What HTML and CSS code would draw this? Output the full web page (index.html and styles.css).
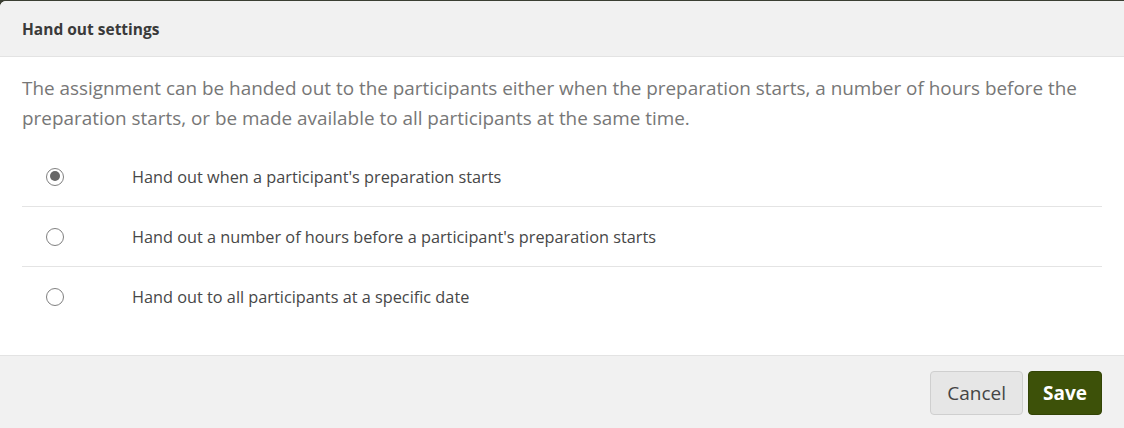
FILE: index.html
```html
<!DOCTYPE html>
<html lang="en">
<head>
<meta charset="utf-8">
<title>Hand out settings</title>
<link rel="stylesheet" href="styles.css">
</head>
<body>
<div class="modal">
  <div class="modal-header">
    <h4 class="modal-title">Hand out settings</h4>
  </div>
  <div class="modal-body">
    <p class="intro">The assignment can be handed out to the participants either when the preparation starts, a number of hours before the preparation starts, or be made available to all participants at the same time.</p>
    <ul class="options">
      <li class="option">
        <span class="radio checked"></span>
        <span class="label">Hand out when a participant's preparation starts</span>
      </li>
      <li class="option">
        <span class="radio"></span>
        <span class="label">Hand out a number of hours before a participant's preparation starts</span>
      </li>
      <li class="option">
        <span class="radio"></span>
        <span class="label">Hand out to all participants at a specific date</span>
      </li>
    </ul>
  </div>
  <div class="modal-footer">
    <button class="btn btn-default">Cancel</button>
    <button class="btn btn-primary">Save</button>
  </div>
</div>
</body>
</html>
```

FILE: styles.css
```css
html, body {
  margin: 0;
  padding: 0;
  height: 100%;
}
body {
  background: #3b3f33;
  font-family: "Open Sans", "Noto Sans", sans-serif;
  padding-top: 1px;
  box-sizing: border-box;
}
.modal {
  background: #fff;
  border-radius: 6px 0 0 0;
  overflow: hidden;
  height: 427px;
  display: flex;
  flex-direction: column;
}
.modal-header {
  background: #f1f1f1;
  border-bottom: 1px solid #e3e3e3;
  height: 56px;
  display: flex;
  align-items: center;
  padding: 0 22px;
  box-sizing: border-box;
}
.modal-title {
  margin: 0;
  font-size: 15.5px;
  font-weight: 700;
  color: #3a3a3a;
}
.modal-body {
  flex: 1;
  padding: 16px 22px 0 22px;
}
.intro {
  margin: 0 0 14px 0;
  font-size: 18.9px;
  line-height: 30px;
  color: #777;
}
.options {
  list-style: none;
  margin: 0;
  padding: 0;
}
.option {
  display: flex;
  align-items: center;
  height: 59px;
  border-bottom: 1px solid #e4e4e4;
}
.option:last-child {
  border-bottom: none;
}
.radio {
  width: 18px;
  height: 18px;
  border: 1.5px solid #808080;
  border-radius: 50%;
  box-sizing: border-box;
  margin-left: 24px;
  margin-right: 68px;
  position: relative;
  flex: none;
}
.radio.checked::after {
  content: "";
  position: absolute;
  left: 2.5px;
  top: 2.5px;
  width: 10px;
  height: 10px;
  border-radius: 50%;
  background: #666;
}
.label {
  font-size: 16.3px;
  color: #474747;
}
.modal-footer {
  background: #f1f1f1;
  border-top: 1px solid #e3e3e3;
  height: 73px;
  box-sizing: border-box;
  display: flex;
  justify-content: flex-end;
  align-items: center;
  padding: 2px 22px 0 22px;
  gap: 5px;
}
.btn {
  height: 44px;
  border-radius: 4px;
  font-family: inherit;
  font-size: 19px;
  padding: 0 16px;
  cursor: pointer;
}
.btn-default {
  background: #e6e6e6;
  border: 1px solid #cfcfcf;
  color: #444;
}
.btn-primary {
  background: #3d5109;
  border: 1px solid #334406;
  color: #fff;
  font-weight: 700;
  padding: 0 14px;
}
```
